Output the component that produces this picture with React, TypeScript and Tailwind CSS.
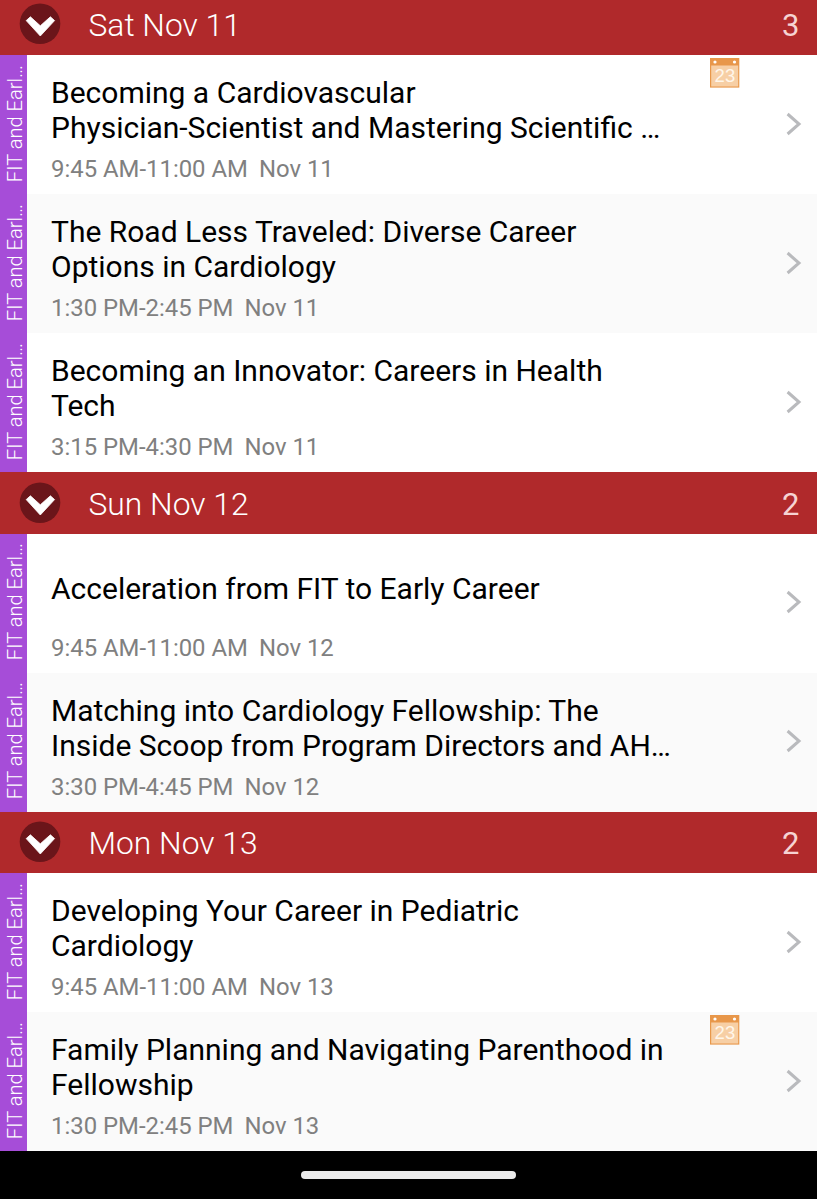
type Session = {
  title: string[];
  time: string;
  date: string;
  scheduled?: boolean;
};

type Day = {
  label: string;
  sessions: Session[];
};

const days: Day[] = [
  {
    label: "Sat Nov 11",
    sessions: [
      {
        title: ["Becoming a Cardiovascular", "Physician-Scientist and Mastering Scientific …"],
        time: "9:45 AM-11:00 AM",
        date: "Nov 11",
        scheduled: true,
      },
      { title: ["The Road Less Traveled: Diverse Career", "Options in Cardiology"], time: "1:30 PM-2:45 PM", date: "Nov 11" },
      { title: ["Becoming an Innovator: Careers in Health", "Tech"], time: "3:15 PM-4:30 PM", date: "Nov 11" },
    ],
  },
  {
    label: "Sun Nov 12",
    sessions: [
      { title: ["Acceleration from FIT to Early Career"], time: "9:45 AM-11:00 AM", date: "Nov 12" },
      {
        title: ["Matching into Cardiology Fellowship: The", "Inside Scoop from Program Directors and AH…"],
        time: "3:30 PM-4:45 PM",
        date: "Nov 12",
      },
    ],
  },
  {
    label: "Mon Nov 13",
    sessions: [
      { title: ["Developing Your Career in Pediatric", "Cardiology"], time: "9:45 AM-11:00 AM", date: "Nov 13" },
      {
        title: ["Family Planning and Navigating Parenthood in", "Fellowship"],
        time: "1:30 PM-2:45 PM",
        date: "Nov 13",
        scheduled: true,
      },
    ],
  },
];

function CollapseIcon() {
  return (
    <svg viewBox="0 0 42 42" className="h-[42px] w-[42px] shrink-0">
      <circle cx="21" cy="20.8" r="20.3" fill="#6b151a" />
      <path d="M7.2 17.6 L11.4 13.8 L21.3 22.8 L31.4 13.8 L35.6 17.6 L21.3 33 Z" fill="#fff" stroke="#fff" strokeWidth="0.8" strokeLinejoin="round" />
    </svg>
  );
}

function CalendarIcon() {
  return (
    <svg viewBox="0 0 30 30" className="h-[30px] w-[30px]">
      <rect width="29.3" height="29.6" fill="#e8974a" />
      <rect x="1.2" y="7.5" width="27" height="21" fill="#f7cfa5" />
      <circle cx="5" cy="4" r="1.6" fill="#fff" />
      <circle cx="24.5" cy="4" r="1.6" fill="#fff" />
      <text x="14.9" y="24.2" textAnchor="middle" fontFamily="Liberation Sans, sans-serif" fontSize="18.5" fill="#fff6ea">
        23
      </text>
    </svg>
  );
}

function DayHeader({ label, count }: { label: string; count: number }) {
  return (
    <div className="flex h-[61.5px] shrink-0 items-center bg-[#b0292b] pl-[19px] pr-[17.5px] text-[31.8px] text-white">
      <CollapseIcon />
      <h2 className="ml-[27.5px] mt-[4px] flex-1 font-light">{label}</h2>
      <span className="mt-[4px] text-[31px] text-[#f6d3d3]">{count}</span>
    </div>
  );
}

function SessionRow({ session, shaded }: { session: Session; shaded: boolean }) {
  return (
    <li className={`relative flex h-[139px] ${shaded ? "bg-[#fafafa]" : "bg-white"}`}>
      <div className="flex w-[26.5px] shrink-0 items-center justify-center bg-[#a64dd8] pb-[2px] pl-[3px]">
        <span className="rotate-180 whitespace-nowrap text-[20.1px] font-light leading-[24px] text-white [writing-mode:vertical-rl]">
          FIT and Earl…
        </span>
      </div>
      <div className="flex min-w-0 flex-1 flex-col pl-[24.5px] pt-[20px]">
        <h3 className="flex h-[70px] flex-col justify-center whitespace-nowrap text-[30px] leading-[35px] text-black">
          {session.title.map((line) => (
            <span key={line}>{line}</span>
          ))}
        </h3>
        <p className="mt-[10px] flex gap-[11px] whitespace-nowrap text-[23.9px] leading-[28px] text-[#808080]">
          <span>{session.time}</span>
          <span>{session.date}</span>
        </p>
      </div>
      <svg viewBox="0 0 16 24" className="mb-[2px] mr-[15px] h-[24px] w-[16px] shrink-0 self-center" fill="none">
        <path d="M1.6 2 L13 12 L1.6 22" stroke="#b9babd" strokeWidth="3" />
      </svg>
      {session.scheduled && (
        <div className="absolute right-[77px] top-[3px]">
          <CalendarIcon />
        </div>
      )}
    </li>
  );
}

export default function App() {
  return (
    <main className="flex h-[1199px] w-[817px] flex-col overflow-hidden bg-black font-[Roboto,sans-serif]">
      <div className="-mt-[6.5px]">
        {days.map((day) => (
          <section key={day.label}>
            <DayHeader label={day.label} count={day.sessions.length} />
            <ul>
              {day.sessions.map((session, i) => (
                <SessionRow key={session.title[0]} session={session} shaded={i % 2 === 1} />
              ))}
            </ul>
          </section>
        ))}
      </div>
      <div className="flex flex-1 items-center justify-center">
        <div className="h-[8px] w-[215px] rounded-full bg-[#ebebeb]" />
      </div>
    </main>
  );
}
